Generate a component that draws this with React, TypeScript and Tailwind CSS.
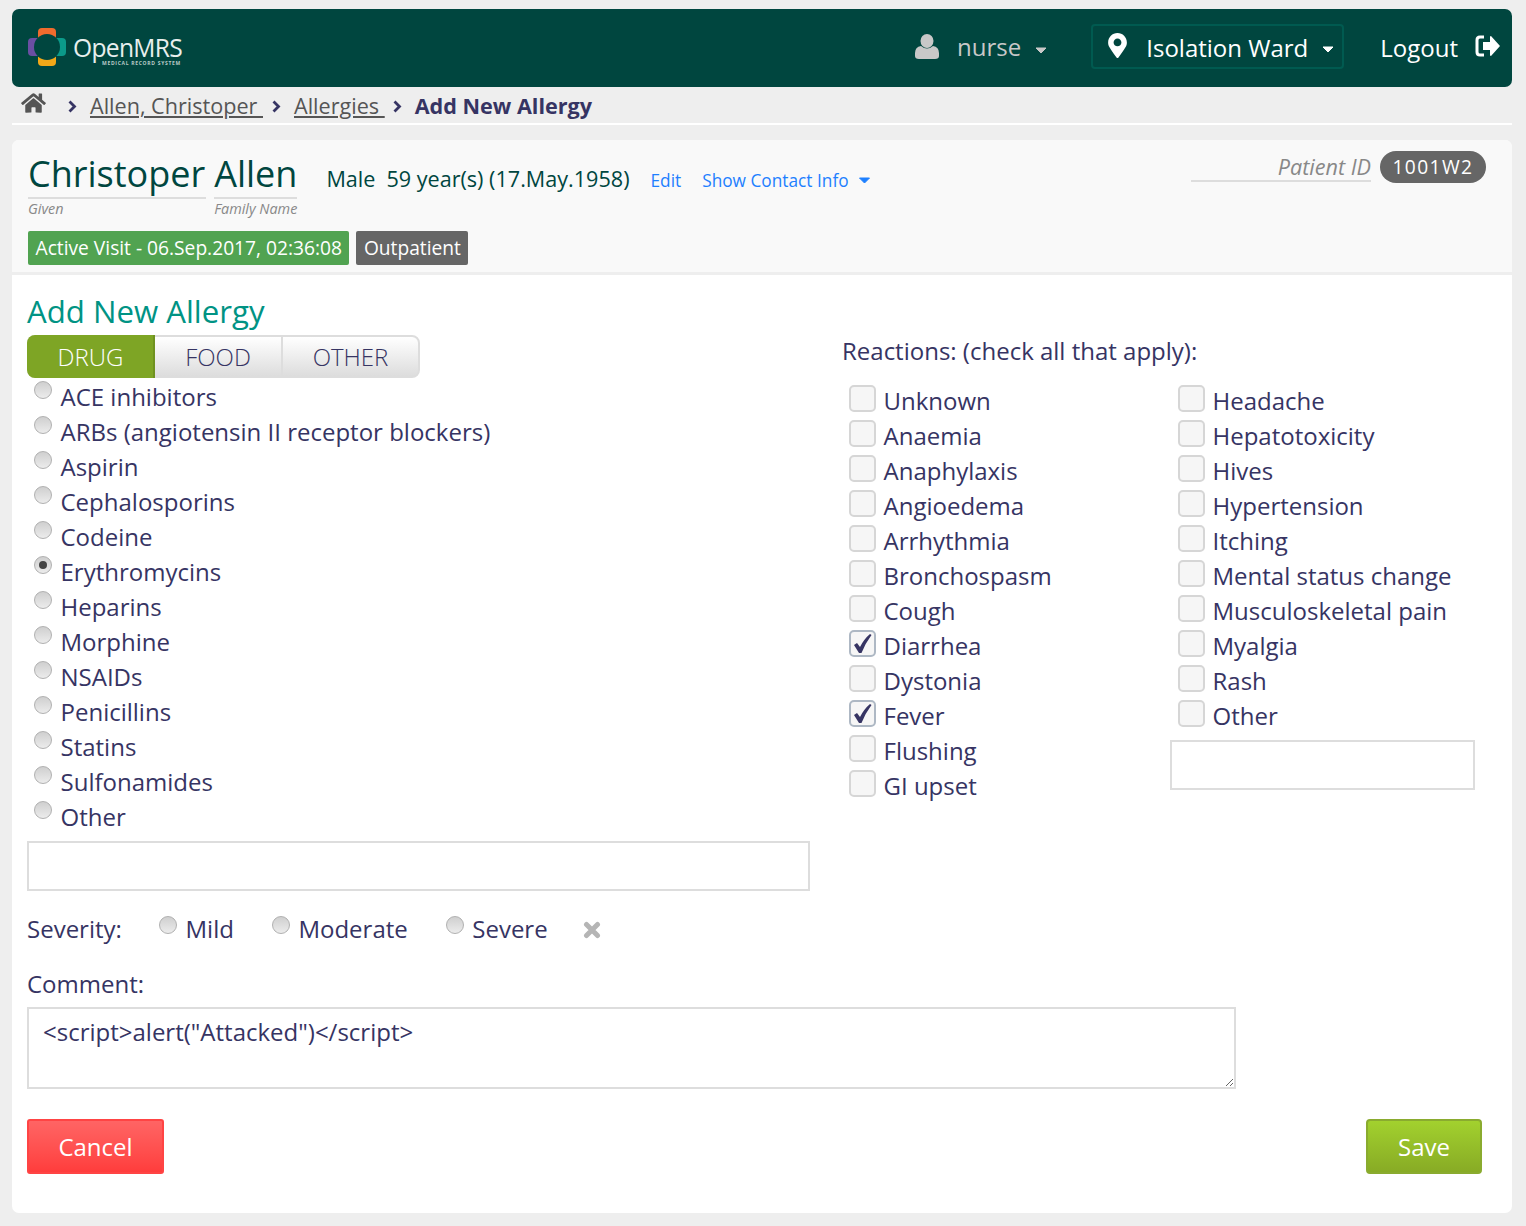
import React from 'react';
import { FaHome, FaMapMarkerAlt } from 'react-icons/fa';

const drugs = ['ACE inhibitors', 'ARBs (angiotensin II receptor blockers)', 'Aspirin', 'Cephalosporins', 'Codeine', 'Erythromycins', 'Heparins', 'Morphine', 'NSAIDs', 'Penicillins', 'Statins', 'Sulfonamides', 'Other'];
const reactionsLeft = ['Unknown', 'Anaemia', 'Anaphylaxis', 'Angioedema', 'Arrhythmia', 'Bronchospasm', 'Cough', 'Diarrhea', 'Dystonia', 'Fever', 'Flushing', 'GI upset'];
const reactionsRight = ['Headache', 'Hepatotoxicity', 'Hives', 'Hypertension', 'Itching', 'Mental status change', 'Musculoskeletal pain', 'Myalgia', 'Rash', 'Other'];
const checked = ['Diarrhea', 'Fever'];

const Radio: React.FC<{ on?: boolean }> = ({ on }) => (
  <span className="w-[18px] h-[18px] rounded-full border border-[#b0b0b0] bg-gradient-to-b from-[#cfcfcf] to-[#ececec] flex items-center justify-center shrink-0">
    {on && <span className="w-2 h-2 rounded-full bg-[#444444]" />}
  </span>
);

const Check: React.FC<{ label: string; on: boolean }> = ({ label, on }) => (
  <div className="h-[35px] flex items-start">
    <span className={`w-[27px] h-[27px] mt-[2px] ml-[7px] rounded-[5px] border-2 bg-[#f6f6f6] flex items-center justify-center shrink-0 ${on ? 'border-[#aeb8c4]' : 'border-[#d6d6d6]'}`}>
      {on && (
        <svg width="23" height="23" viewBox="0 0 23 23">
          <path d="M3 13 L6 11 L9 15 Q13 7 19 2 L20.5 3 Q14.5 11 10.5 21 L8 21 Z" fill="#363463" />
        </svg>
      )}
    </span>
    <span className="ml-[7.5px] text-[24px] leading-[33px] mt-[1px]">{label}</span>
  </div>
);

const Caret: React.FC<{ className: string }> = ({ className }) => (
  <svg viewBox="0 0 12 7" className={className}>
    <path d="M1 1 H11 L6 6 Z" fill="currentColor" stroke="currentColor" strokeLinejoin="round" />
  </svg>
);

const Chevron: React.FC<{ className: string }> = ({ className }) => (
  <svg viewBox="0 0 9 13" className={`w-[9px] h-[13px] shrink-0 text-[#363463] ${className}`}>
    <path d="M1.5 1.5 L6.5 6.5 L1.5 11.5" fill="none" stroke="currentColor" strokeWidth="2.8" />
  </svg>
);

const Logo: React.FC = () => (
  <svg width="158" height="40" viewBox="0 0 158 40" className="shrink-0 -mt-[2px]">
    <path d="M11 5 Q11 1 15 1 H25 Q29 1 29 5 V11 H11 Z" fill="#ef6b2d" />
    <path d="M5 11 Q1 11 1 15 V25 Q1 29 5 29 H11 V11 Z" fill="#6a4fa3" />
    <path d="M35 11 Q39 11 39 15 V25 Q39 29 35 29 H29 V11 Z" fill="#0b9a8a" />
    <path d="M11 35 Q11 39 15 39 H25 Q29 39 29 35 V29 H11 Z" fill="#f2a818" />
    <circle cx="20" cy="20" r="13" fill="#00463f" />
    <text x="46" y="30" fontSize="24.6" letterSpacing="-0.7" fill="#e8efee">OpenMRS</text>
    <text x="75" y="38" fontSize="5" fontWeight="700" letterSpacing="0.7" fill="#b9cbc8">MEDICAL RECORD SYSTEM</text>
  </svg>
);

const App: React.FC = () => {
  return (
    <div className="font-['Open_Sans',sans-serif] bg-[#eeeeee] min-h-[1226px] pl-3 pr-[14px] pt-[9px] text-[#363463]">
      <header className="h-[78px] bg-[#00463f] rounded-[7px] flex items-center pl-[15px] pr-[12px]">
        <Logo />
        <div className="ml-auto flex items-center">
          <svg viewBox="0 0 24 25" className="w-[24px] h-[25px] -mt-[4px] text-[#c8c8c8]">
            <ellipse cx="12" cy="7" rx="6.5" ry="7" fill="currentColor" />
            <path d="M0 19 Q0 13 6 12 Q12 17 18 12 Q24 13 24 19 V22 Q24 25 20 25 H4 Q0 25 0 22 Z" fill="currentColor" />
          </svg>
          <span className="ml-[18px] -mt-[2px] text-[24px] text-[#c8c8c8]">nurse</span>
          <Caret className="ml-[14px] mt-[4px] text-[#c8c8c8] w-[12px] h-[7px]" />
          <div className="ml-[44px] -mt-[3px] w-[253px] h-[45px] border-2 border-[#005a50] rounded-[4px] flex items-center pl-[15px] text-white">
            <FaMapMarkerAlt className="w-[19px] h-[25px] -mt-[3px]" />
            <span className="ml-[19px] mt-[2px] text-[24px]">Isolation Ward</span>
            <Caret className="ml-[14px] mt-[6px] w-[12px] h-[7px]" />
          </div>
          <span className="ml-[36px] -mt-[1px] text-[24px] text-white">Logout</span>
          <svg viewBox="0 0 25 22" className="ml-[17px] -mt-[5px] w-[25px] h-[22px] text-white">
            <path d="M9 2 H5 Q2 2 2 5 V17 Q2 20 5 20 H9" fill="none" stroke="currentColor" strokeWidth="3" />
            <path d="M8 7 H15 V2 Q15 1 16 1 L25 11 L16 21 Q15 21 15 20 V15 H8 Z" fill="currentColor" />
          </svg>
        </div>
      </header>

      <nav className="h-[38px] border-b-2 border-white flex items-center pl-[9px] pt-[2px] text-[21.6px] text-[#555555]">
        <FaHome className="w-[25px] h-[22px] -mt-[6px] text-[#555555]" />
        <Chevron className="ml-[22px]" />
        <a className="ml-[13px] underline">Allen, Christoper&nbsp;</a>
        <Chevron className="ml-[9px]" />
        <a className="ml-[13px] underline">Allergies&nbsp;</a>
        <Chevron className="ml-[8px]" />
        <span className="ml-[13px] font-bold text-[#363463]">Add New Allergy</span>
      </nav>

      <main className="mt-[15px] h-[1073px] bg-white rounded-[7px]">
        <section className="h-[135px] bg-[#f9f9f9] border-b-[3px] border-[#eeeeee] rounded-t-[7px] pl-4 pr-[26px]">
          <div className="flex items-start">
            <div className="pt-[11px]">
              <div className="text-[36px] leading-[46px] text-[#00463f] border-b-2 border-[#dddddd] pr-[1px]">Christoper</div>
              <div className="text-[14.4px] italic text-[#888888] leading-[20px]">Given</div>
            </div>
            <div className="pt-[11px] ml-[8px]">
              <div className="text-[36px] leading-[46px] text-[#00463f] border-b-2 border-[#dddddd]">Allen</div>
              <div className="text-[14.4px] italic text-[#888888] leading-[20px]">Family Name</div>
            </div>
            <div className="ml-[29px] mt-[23px] flex items-baseline text-[#00463f] text-[21.6px] leading-[32px]">
              <span>Male</span>
              <span className="ml-[11px]">59 year(s) (17.May.1958)</span>
              <a className="ml-[21px] text-[#1e80ff] text-[17.28px]">Edit</a>
              <a className="ml-[21px] text-[#1e80ff] text-[17.28px]">Show Contact Info</a>
              <Caret className="ml-[9px] self-center text-[#1e80ff] w-[13px] h-[7px]" />
            </div>
            <div className="ml-auto mt-[11px] flex items-center">
              <span className="w-[180px] h-[30px] border-b-2 border-[#dddddd] text-right text-[21.6px] italic text-[#888888] leading-[30px]">Patient ID</span>
              <span className="ml-[9px] h-[32px] w-[106px] rounded-full bg-[#666666] text-white text-[19.2px] flex items-center justify-center tracking-[1.4px]">1001W2</span>
            </div>
          </div>
          <div className="flex mt-[12px] text-white text-[19.2px]">
            <span className="h-[34px] px-[7.5px] bg-[#51a351] rounded-[2px] flex items-center">Active Visit - 06.Sep.2017, 02:36:08</span>
            <span className="h-[34px] ml-[7px] px-[7.5px] bg-[#666666] rounded-[2px] flex items-center">Outpatient</span>
          </div>
        </section>

        <section className="pl-[15px] pr-[30px]">
          <div className="flex">
            <div className="w-[783px]">
              <h1 className="text-[31.2px] leading-[40px] mt-[16px] text-[#009384]">Add New Allergy</h1>
              <div className="mt-[4px] w-[393px] h-[43px] flex rounded-[8px] border-2 border-[#dddddd] bg-gradient-to-b from-white to-[#dddddd] text-[24px] font-light">
                <span className="w-[128px] -my-[2px] -ml-[2px] bg-[#7ea525] border-r-2 border-[#6f9220] rounded-l-[8px] pl-px text-white flex items-center justify-center">DRUG</span>
                <span className="w-[128px] border-r-2 border-[#dddddd] flex items-center justify-center">FOOD</span>
                <span className="flex-1 flex items-center justify-center">OTHER</span>
              </div>
              <div className="mt-[2px]">
                {drugs.map(d => (
                  <div key={d} className="h-[35px] flex items-start pl-[7px]">
                    <span className="mt-px"><Radio on={d === 'Erythromycins'} /></span>
                    <span className="ml-[8.5px] text-[24px] leading-[33px]">{d}</span>
                  </div>
                ))}
              </div>
              <input className="mt-[6px] block w-[783px] h-[50px] border-2 border-[#dddddd] bg-white outline-none" />
            </div>

            <div className="ml-[32px] pt-[59px] flex-1">
              <div className="text-[24px] leading-[33px]">Reactions: (check all that apply):</div>
              <div className="flex mt-[16px]">
                <div className="w-[329px]">
                  {reactionsLeft.map(r => <Check key={r} label={r} on={checked.includes(r)} />)}
                </div>
                <div className="flex-1">
                  {reactionsRight.map(r => <Check key={r} label={r} on={false} />)}
                  <input className="-ml-px mt-[7px] block w-[305px] h-[50px] border-2 border-[#dddddd] bg-white outline-none" />
                </div>
              </div>
            </div>
          </div>

          <div className="mt-[21px] flex items-start text-[24px] leading-[33px]">
            <span className="w-[132px]">Severity:</span>
            <span className="mt-[4px]"><Radio /></span>
            <span className="ml-[8.5px]">Mild</span>
            <span className="ml-[38px] mt-[4px]"><Radio /></span>
            <span className="ml-[8.5px]">Moderate</span>
            <span className="ml-[38px] mt-[4px]"><Radio /></span>
            <span className="ml-[8.5px]">Severe</span>
            <svg viewBox="0 0 18 18" className="ml-[35.5px] mt-[9px] w-[18px] h-[18px] text-[#b5b5b5]">
              <path d="M3.5 3.5 L14.5 14.5 M14.5 3.5 L3.5 14.5" stroke="currentColor" strokeWidth="5" strokeLinecap="round" />
            </svg>
          </div>

          <div className="mt-[22px] text-[24px] leading-[33px]">Comment:</div>
          <textarea
            defaultValue={'<script>alert("Attacked")</script>'}
            className="mt-[7px] block w-[1209px] h-[82px] border-2 border-[#dddddd] bg-white px-[14px] py-[6px] text-[24px] leading-[33px] outline-none text-[#363463]"
          />

          <div className="mt-[30px] flex justify-between">
            <button className="w-[137px] h-[55px] rounded-[3px] border-2 border-[#ff4444] bg-gradient-to-b from-[#ff6464] to-[#ff3c3c] text-white text-[24px]">Cancel</button>
            <button className="w-[116px] h-[55px] rounded-[4px] border-2 border-[#8aab2f] bg-gradient-to-b from-[#a2d12e] to-[#88ab25] text-white text-[24px]">Save</button>
          </div>
        </section>
      </main>
    </div>
  );
};

export default App;
